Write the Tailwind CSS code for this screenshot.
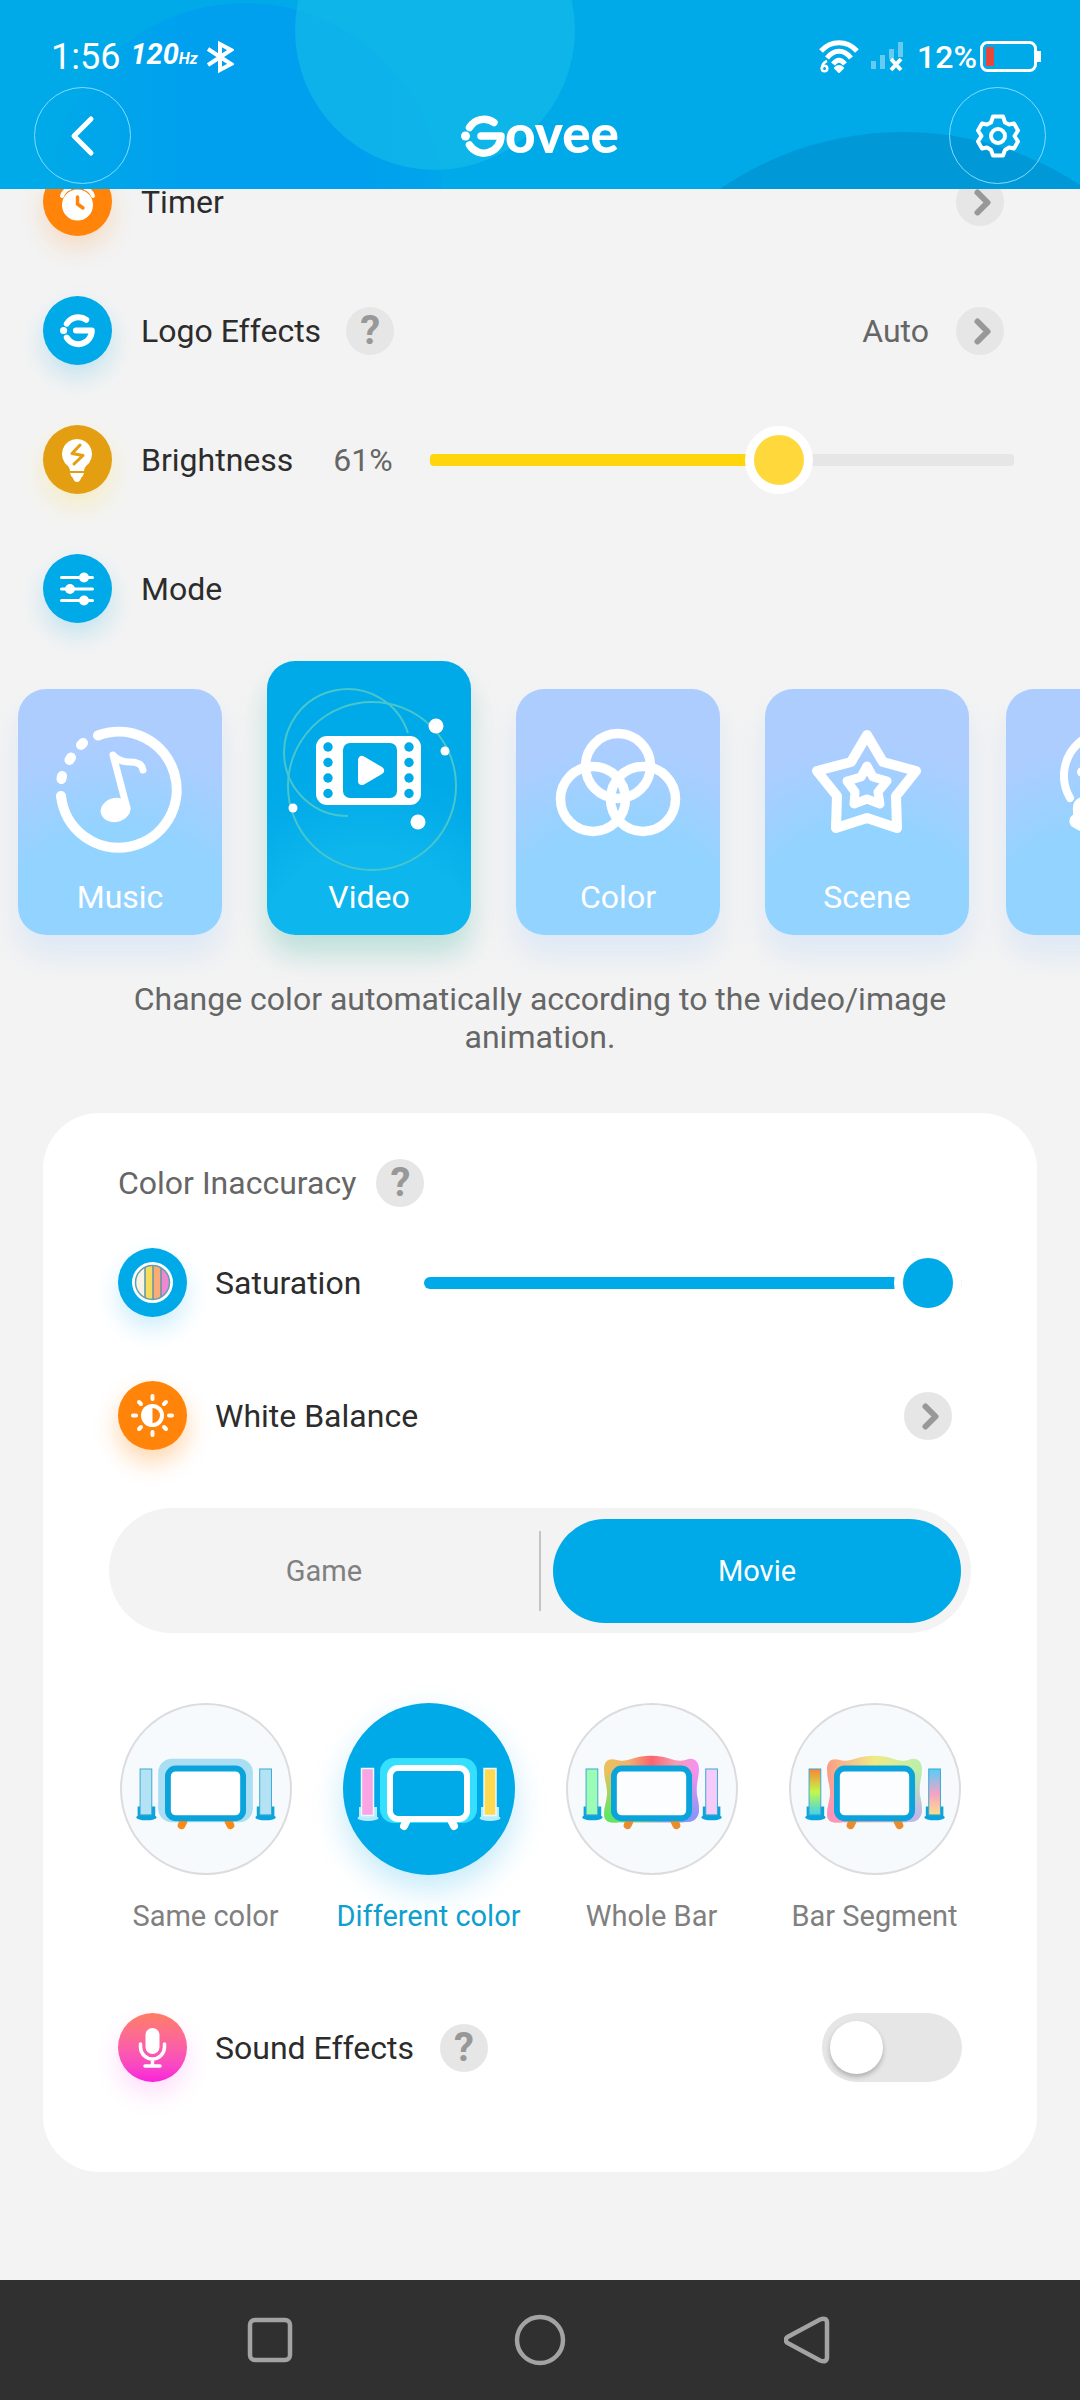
<!DOCTYPE html>
<html lang="en">

<head>
    <meta charset="UTF-8">
    <meta name="viewport" content="width=device-width, initial-scale=1.0">
    <title>Govee Home</title>
    <script src="https://cdn.jsdelivr.net/npm/@tailwindcss/browser@4"></script>
</head>

<body class="min-h-screen flex flex-col bg-[#f3f3f3] font-[Roboto,sans-serif] text-[32px] leading-[38px] text-[#2c2c2c]">

    <!-- Shared icons -->
    <svg class="absolute size-0" aria-hidden="true">
        <symbol id="govee-g" viewBox="0 0 44 44">
            <circle cx="4.5" cy="22" r="4.5" fill="#fff" />
            <path d="M8.500 13.500A17 17 0 0 1 33 8.500M20 22H40A17 17 0 0 1 8.500 31" fill="none" stroke="#fff" stroke-width="7.500" stroke-linecap="round" stroke-linejoin="round" />
        </symbol>
        <symbol id="chevron" viewBox="0 0 48 48">
            <path d="M21.500 14.500L31.500 24.500L21.500 34.500" fill="none" stroke="#989898" stroke-width="6" stroke-linecap="round" stroke-linejoin="round" />
        </symbol>
        <!-- Lamp stands: the tubes are filled by each use -->
        <symbol id="stand" viewBox="0 0 22 56">
            <path d="M2 41h18v10H2z" fill="currentColor" />
            <ellipse cx="11" cy="52" rx="10.500" ry="3" fill="currentColor" />
        </symbol>
        <defs>
            <path id="blob" d="M37 68C36 57 42 54 49 56C60 60 66 52 85 52C104 52 110 60 121 56C129 53 135 58 134 68C133 78 131 82 132 92C134 102 135 108 133 113C130 120 124 120 118 120H52C44 121 37 120 37 112C37 104 40 98 40 90C40 82 37 76 37 68Z" />
            <linearGradient id="fadeGrad" x1="0" y1="0" x2="0" y2="1">
                <stop offset=".25" stop-color="#000" />
                <stop offset=".85" stop-color="#fff" />
            </linearGradient>
            <mask id="fade" maskUnits="userSpaceOnUse" x="30" y="50" width="110" height="74">
                <rect x="30" y="50" width="110" height="74" fill="url(#fadeGrad)" />
            </mask>
        </defs>
    </svg>

    <header class="relative z-10 overflow-hidden bg-[#00a9e8] text-white">
        <svg class="absolute inset-0 size-full" preserveAspectRatio="xMidYMin slice" viewBox="0 0 1080 189" aria-hidden="true">
            <defs>
                <linearGradient id="deep" x1="0" x2="1" y1="0" y2="0">
                    <stop offset="0" stop-color="#00a0ee" stop-opacity="0" />
                    <stop offset=".35" stop-color="#00a0ee" />
                    <stop offset=".8" stop-color="#00a0ee" />
                    <stop offset="1" stop-color="#00a0ee" stop-opacity=".4" />
                </linearGradient>
            </defs>
            <circle cx="245" cy="200" r="197" fill="url(#deep)" />
            <circle cx="435" cy="30" r="140" fill="#14bbe8" fill-opacity=".65" />
            <circle cx="903" cy="454" r="322" fill="#0098d6" />
        </svg>

        <!-- Status bar -->
        <div class="relative flex h-[87px] items-center pt-[26px] pr-[39px] pl-[51px]">
            <span class="text-[36px]">1:56</span>
            <span class="ml-[10px] font-['Liberation_Sans_Narrow',Roboto,sans-serif] text-[29px] font-bold italic">120<span class="text-[16px]">Hz</span></span>
            <svg class="ml-[8px] h-[34px] w-[28px]" viewBox="0 0 28 34" fill="none" stroke="#fff" stroke-width="4" aria-hidden="true">
                <path d="M2 9L25 24L14 30V4L25 10L2 25" stroke-linejoin="miter" />
            </svg>
            <svg class="ml-auto h-[34px] w-[40px]" viewBox="0 0 40 34" fill="none" stroke="#fff" stroke-width="5" aria-hidden="true">
                <path d="M2 11C12 0 28 0 38 11M8 18C15 9 25 9 32 18M14 24C18 19 22 19 26 24" />
                <path d="M16 28Q20 24 24 28L20 32Z" fill="#fff" stroke-width="2" stroke-linejoin="round" />
                <path d="M8 21Q3 23 3 28.500" stroke-width="2.500" />
                <circle cx="5.500" cy="28.500" r="2.800" stroke-width="2.500" />
            </svg>
            <svg class="ml-[12px] h-[32px] w-[33px]" viewBox="0 0 33 32" aria-hidden="true">
                <path d="M0 20h5v8H0zM9 14h5v14H9zM18 8h5v10H18zM27 1h5v15H27z" fill="#fff" fill-opacity=".4" />
                <path d="M20 18L30 29M30 18L20 29" stroke="#fff" stroke-width="4" />
            </svg>
            <span class="ml-[13px] text-[32px] font-medium">12%</span>
            <svg class="ml-[3px] h-[31px] w-[61px]" viewBox="0 0 61 31" aria-hidden="true">
                <rect x="1.500" y="1.500" width="54" height="28" rx="6" fill="none" stroke="#fff" stroke-width="3" />
                <path d="M57 10h4v11h-4z" fill="#fff" />
                <rect x="6" y="6" width="8" height="19" fill="#e8473c" />
            </svg>
        </div>

        <div class="relative flex items-center justify-between px-[34px] pb-[5px]">
            <button aria-label="Back" class="flex size-[97px] items-center justify-center rounded-full border-[1px] border-[#7fdcff]">
                <svg class="size-[48px]" viewBox="0 0 48 48" fill="none" stroke="#fff" stroke-width="5" stroke-linecap="round" stroke-linejoin="round">
                    <path d="M32 7L15 24L32 41" />
                </svg>
            </button>
            <h1 aria-label="Govee" class="flex items-center font-[Lato,sans-serif] text-[53px] leading-[60px] font-black">
                <svg class="size-[44px]"><use href="#govee-g" /></svg><span class="pb-[6px]">ovee</span>
            </h1>
            <button aria-label="Settings" class="flex size-[97px] items-center justify-center rounded-full border-[1px] border-[#7fdcff]">
                <svg class="size-[48px]" viewBox="0 0 48 48" fill="none" stroke="#fff" stroke-width="4" stroke-linejoin="round">
                    <circle cx="24" cy="24" r="7" />
                    <path d="M19 4.500H29L31 10.500L35 12.500L40 11.500L44 18.500L40.500 24L44 29.500L40 36.500L35 35.500L31 38L29 43.500H19L17 38L13 35.500L8 36.500L4 29.500L7.500 24L4 18.500L8 11.500L13 12.500L17 10.500Z" />
                </svg>
            </button>
        </div>
    </header>

    <!-- The list is scrolled a little way under the header -->
    <main class="-mt-[52px] flex-1 pb-[107px]">
        <section class="pl-[43px]">
            <div class="flex h-[129px] items-center pr-[76px]">
                <svg class="size-[69px] rounded-full bg-[#ff8409] shadow-[0_12px_24px_#ff840933]" viewBox="0 0 69 69" aria-hidden="true">
                    <path d="M19 29Q21 23 27 21M50 29Q48 23 42 21" fill="none" stroke="#fff" stroke-width="4" stroke-linecap="round" />
                    <circle cx="34.500" cy="38" r="15.500" fill="#fff" />
                    <path d="M34.500 30V37L40 41" fill="none" stroke="#ff8409" stroke-width="3.500" stroke-linecap="round" />
                </svg>
                <span class="ml-[29px]">Timer</span>
                <button aria-label="Open timer" class="ml-auto size-[48px] rounded-full bg-[#e6e6e6]"><svg class="size-full"><use href="#chevron" /></svg></button>
            </div>

            <div class="flex h-[129px] items-center pr-[76px]">
                <span class="flex size-[69px] items-center justify-center rounded-full bg-[#00a9e8] shadow-[0_12px_24px_#00a9e833]">
                    <svg class="size-[35px]"><use href="#govee-g" /></svg>
                </span>
                <span class="ml-[29px]">Logo Effects</span>
                <button aria-label="About logo effects" class="ml-[25px] size-[48px] rounded-full bg-[#e6e6e6] text-[40px] leading-[48px] font-bold text-[#989898]">?</button>
                <span class="ml-auto text-[#666]">Auto</span>
                <button aria-label="Open logo effects" class="ml-[27px] size-[48px] rounded-full bg-[#e6e6e6]"><svg class="size-full"><use href="#chevron" /></svg></button>
            </div>

            <div class="flex h-[129px] items-center pr-[66px]">
                <svg class="size-[69px] rounded-full bg-[#e39e12] shadow-[0_12px_24px_#ffd50c33]" viewBox="0 0 69 69" aria-hidden="true">
                    <path d="M34 14a15 15 0 0 1 9 27Q41 43 41 46H27Q27 43 25 41A15 15 0 0 1 34 14ZM27 48H41Q40 52 38 53Q37 57 34 57Q31 57 30 53Q28 52 27 48Z" fill="#fff" />
                    <path d="M37 20L29 28.500L40 30.500L31 39" fill="none" stroke="#e39e12" stroke-width="3" stroke-linejoin="round" stroke-linecap="round" />
                </svg>
                <label for="brightness" class="ml-[29px]">Brightness</label>
                <output for="brightness" class="ml-[40px] text-[#666]">61%</output>
                <input type="range" id="brightness" min="0" max="100" value="61" style="background-size: 61% 100%"
                    class="ml-[37px] h-[12px] min-w-0 flex-1 appearance-none rounded-[4px] bg-[#e6e6e6] bg-[linear-gradient(#ffd50c,#ffd50c)] bg-no-repeat [&::-webkit-slider-thumb]:size-[68px] [&::-webkit-slider-thumb]:appearance-none [&::-webkit-slider-thumb]:rounded-full [&::-webkit-slider-thumb]:border-[9px] [&::-webkit-slider-thumb]:border-solid [&::-webkit-slider-thumb]:border-white [&::-webkit-slider-thumb]:bg-[#ffd93b]">
            </div>

            <div class="flex h-[129px] items-center">
                <svg class="size-[69px] rounded-full bg-[#00a9e8] shadow-[0_12px_24px_#00a9e833]" viewBox="0 0 69 69" aria-hidden="true">
                    <path d="M18.500 23.500h31M18.500 35h31M18.500 46.500h31" stroke="#fff" stroke-width="3" stroke-linecap="round" />
                    <g fill="#fff">
                        <circle cx="41" cy="23.500" r="5" />
                        <circle cx="27" cy="35" r="5" />
                        <circle cx="41" cy="46.500" r="5" />
                    </g>
                </svg>
                <h2 class="ml-[29px]">Mode</h2>
            </div>
        </section>

        <!-- Mode cards, the last one runs off the right edge -->
        <div class="mt-[8px] flex items-end gap-[45px] overflow-x-clip pl-[18px] text-white">
            <button class="w-[204px] shrink-0 rounded-[28px] bg-[radial-gradient(circle_at_50%_110%,#93d3ff_45%,#adcdff_75%)] pb-[10px] shadow-[0_20px_28px_#93c3ff38]">
                <svg class="block h-[180px] w-full" viewBox="0 0 204 180" fill="none" stroke="#fff" stroke-width="10" stroke-linecap="round">
                    <path d="M80 46.500A58 58 0 1 1 43 107M43.500 90l.5-3M51.500 71l1.500-2.500M63 56l2-2" />
                    <ellipse cx="97.500" cy="121" rx="15" ry="12" transform="rotate(-12 97.500 121)" fill="#fff" stroke="none" />
                    <path d="M109 119L95 66Q101 73 112 73Q124 73 125 81" stroke-width="7" stroke-linejoin="round" />
                </svg>
                <span class="block leading-[56px]">Music</span>
            </button>
            <button aria-pressed="true" class="w-[204px] shrink-0 rounded-[28px] bg-[radial-gradient(circle_at_50%_110%,#0db6ec_35%,#00a9e8_60%)] pb-[10px] shadow-[0_20px_28px_#00a08a38]">
                <svg class="block h-[208px] w-full overflow-visible" viewBox="0 0 204 208">
                    <g fill="none" stroke="#48c6cd" stroke-width="2">
                        <circle cx="105" cy="125" r="84" />
                        <path d="M141 72A63.500 63.500 0 1 0 81 155" />
                    </g>
                    <g fill="#fff">
                        <circle cx="169" cy="65" r="7.500" />
                        <circle cx="178" cy="90" r="4.500" />
                        <circle cx="26" cy="147" r="4.500" />
                        <circle cx="151" cy="161" r="7.500" />
                        <rect x="49" y="75" width="105" height="69" rx="11" />
                    </g>
                    <g fill="#00a9e8">
                        <rect x="76" y="82" width="54" height="55" rx="7" />
                        <circle cx="61" cy="86" r="4.700" />
                        <circle cx="61" cy="101.500" r="4.700" />
                        <circle cx="61" cy="117" r="4.700" />
                        <circle cx="61" cy="132.500" r="4.700" />
                        <circle cx="142" cy="86" r="4.700" />
                        <circle cx="142" cy="101.500" r="4.700" />
                        <circle cx="142" cy="117" r="4.700" />
                        <circle cx="142" cy="132.500" r="4.700" />
                    </g>
                    <path d="M95 99V120L113 109.500Z" fill="#fff" stroke="#fff" stroke-width="8" stroke-linejoin="round" />
                </svg>
                <span class="block leading-[56px]">Video</span>
            </button>
            <button class="w-[204px] shrink-0 rounded-[28px] bg-[radial-gradient(circle_at_50%_110%,#93d3ff_45%,#adcdff_75%)] pb-[10px] shadow-[0_20px_28px_#93c3ff38]">
                <svg class="block h-[180px] w-full" viewBox="0 0 204 180" fill="none" stroke="#fff" stroke-width="9.500">
                    <circle cx="102" cy="77" r="32.500" />
                    <circle cx="77" cy="110" r="32.500" />
                    <circle cx="127" cy="110" r="32.500" />
                </svg>
                <span class="block leading-[56px]">Color</span>
            </button>
            <button class="w-[204px] shrink-0 rounded-[28px] bg-[radial-gradient(circle_at_50%_110%,#93d3ff_45%,#adcdff_75%)] pb-[10px] shadow-[0_20px_28px_#93c3ff38]">
                <svg class="block h-[180px] w-full" viewBox="0 0 204 180" fill="none" stroke="#fff" stroke-linejoin="round">
                    <path d="M102 46L118 73L151 82L131 107L132 139L102 129L71 139L72 107L52 82L86 73Z" stroke-width="10" />
                    <path d="M102 77L108 88L122 92L113 103L115 115L102 110L89 115L90 103L82 92L96 88Z" stroke-width="9" />
                </svg>
                <span class="block leading-[56px]">Scene</span>
            </button>
            <button aria-label="More modes" class="-ml-[8px] h-[246px] w-[204px] shrink-0 rounded-[28px] bg-[radial-gradient(circle_at_50%_110%,#93d3ff_45%,#adcdff_75%)] pb-[66px] shadow-[0_20px_28px_#93c3ff38]">
                <svg class="block h-[180px] w-full" viewBox="0 0 204 180" fill="none" stroke="#fff" stroke-width="8" stroke-linecap="round">
                    <path d="M64 109A44 44 0 1 1 140 109" />
                    <circle cx="76" cy="83" r="5" fill="#fff" stroke="none" />
                    <path d="M76 112Q70 114 71 122V128Q66 130 68 134Q72 137 80 140H124Q137 137 134 132V122Q134 112 124 112Z" fill="#fff" />
                </svg>
            </button>
        </div>

        <p class="mt-[45px] px-[108px] text-center text-[#666]">Change color automatically according to the video/image animation.</p>

        <section class="mx-[43px] mt-[57px] rounded-[56px] bg-white px-[75px] pt-[46px] pb-[90px]">
            <div class="flex items-center">
                <h2 class="text-[#666]">Color Inaccuracy</h2>
                <button aria-label="About color inaccuracy" class="ml-[20px] size-[48px] rounded-full bg-[#e6e6e6] text-[40px] leading-[48px] font-bold text-[#989898]">?</button>
            </div>

            <div class="mt-[41px] flex items-center">
                <svg class="size-[69px] rounded-full bg-[#00a9e8] shadow-[0_12px_24px_#00a9e833]" viewBox="0 0 69 69" aria-hidden="true">
                    <defs>
                        <clipPath id="disc"><circle cx="34.500" cy="34.500" r="17" /></clipPath>
                    </defs>
                    <circle cx="34.500" cy="34.500" r="20.500" fill="#fff" />
                    <g clip-path="url(#disc)">
                        <path d="M17 17h10v36H17z" fill="#f7f4e4" />
                        <path d="M27 17h8v36h-8z" fill="#f5dc5c" />
                        <path d="M35 17h8v36h-8z" fill="#fbab76" />
                        <path d="M43 17h10v36H43z" fill="#ee88cf" />
                        <path d="M27 17v36M35 17v36M43 17v36" stroke="#5f93a8" stroke-width="1.500" />
                    </g>
                    <circle cx="34.500" cy="34.500" r="17" fill="none" stroke="#5fa0b8" stroke-width="1.500" />
                </svg>
                <label for="saturation" class="ml-[28px] w-[209px]">Saturation</label>
                <input type="range" id="saturation" min="0" max="100" value="100" style="background-size: 100% 100%"
                    class="h-[12px] min-w-0 flex-1 appearance-none rounded-full bg-[#e6e6e6] bg-[linear-gradient(#00a9e8,#00a9e8)] bg-no-repeat [&::-webkit-slider-thumb]:size-[68px] [&::-webkit-slider-thumb]:appearance-none [&::-webkit-slider-thumb]:rounded-full [&::-webkit-slider-thumb]:border-[9px] [&::-webkit-slider-thumb]:border-solid [&::-webkit-slider-thumb]:border-white [&::-webkit-slider-thumb]:bg-[#00a9e8]">
            </div>

            <div class="mt-[64px] flex items-center">
                <svg class="size-[69px] rounded-full bg-[#ff8409] shadow-[0_12px_24px_#ff840955]" viewBox="0 0 69 69" aria-hidden="true">
                    <circle cx="34.500" cy="34.500" r="11.500" fill="#fff" />
                    <path d="M34.500 27A7.500 7.500 0 0 1 34.500 42Z" fill="#ff8409" />
                    <path d="M34.500 15v3M34.500 51v3M15 34.500h3M51 34.500h3M21 21l2 2M46 46l2 2M21 48l2-2M46 23l2-2" stroke="#fff" stroke-width="4" stroke-linecap="round" />
                </svg>
                <span class="ml-[28px]">White Balance</span>
                <button aria-label="Open white balance" class="mr-[10px] ml-auto size-[48px] rounded-full bg-[#e6e6e6]"><svg class="size-full"><use href="#chevron" /></svg></button>
            </div>

            <div class="-mx-[9px] mt-[58px] grid h-[125px] grid-cols-[1fr_2px_1fr] items-center rounded-full bg-[#f3f3f3] text-[29px]">
                <button class="h-[104px] rounded-full text-[#808080]">Game</button>
                <span class="h-[80px] bg-[#c4c4c4]"></span>
                <button aria-pressed="true" class="mr-[10px] ml-[12px] h-[104px] rounded-full bg-[#00a9e8] text-white">Movie</button>
            </div>

            <!-- How the picture colors are spread over the lights -->
            <div class="-mx-[24px] mt-[70px] grid grid-cols-4 text-[29px] text-[#808080]">
                <button class="flex flex-col items-center">
                    <svg class="size-[172px] rounded-full border-[2px] border-[#dcdcde] bg-[#f6fafd]" viewBox="0 0 172 172">
                        <rect x="37" y="55" width="97" height="65" rx="14" fill="#aadff3" />
                        <path d="M63 119L61 123M109 119L111 123" stroke="#f98a18" stroke-width="8" stroke-linecap="round" />
                        <rect x="47" y="65" width="77" height="51" rx="8" fill="#fff" stroke="#0ba3dc" stroke-width="6" />
                        <g color="#0ba3dc" stroke="#3aa9d0">
                            <use href="#stand" x="14" y="63" width="22" height="56" stroke="none" />
                            <rect x="18.500" y="65.500" width="12" height="47" fill="#b4e2f5" />
                            <use href="#stand" x="136" y="63" width="22" height="56" stroke="none" />
                            <rect x="141" y="65.500" width="12" height="47" fill="#b4e2f5" />
                        </g>
                    </svg>
                    <span class="mt-[22px]">Same color</span>
                </button>
                <button aria-pressed="true" class="flex flex-col items-center text-[#0d9fd0]">
                    <svg class="size-[172px] rounded-full bg-[#00a9e8] shadow-[0_14px_32px_#00a9e83d]" viewBox="0 0 172 172">
                        <rect x="37" y="55" width="97" height="65" rx="14" fill="#35e0ff" />
                        <path d="M63 119L61 123M109 119L111 123" stroke="#fff" stroke-width="8" stroke-linecap="round" />
                        <rect x="47" y="65" width="77" height="51" rx="8" fill="#00a9e8" stroke="#fff" stroke-width="6" />
                        <g color="#b5ecff" stroke="#e8f9ff" stroke-width="1.500">
                            <use href="#stand" x="14" y="63" width="22" height="56" stroke="none" />
                            <rect x="18.500" y="65.500" width="12" height="47" fill="#fba4e3" />
                            <use href="#stand" x="136" y="63" width="22" height="56" stroke="none" />
                            <rect x="141" y="65.500" width="12" height="47" fill="#ffd94f" />
                        </g>
                    </svg>
                    <span class="mt-[22px]">Different color</span>
                </button>
                <button class="flex flex-col items-center">
                    <svg class="size-[172px] rounded-full border-[2px] border-[#dcdcde] bg-[#f6fafd]" viewBox="0 0 172 172">
                        <defs>
                            <linearGradient id="wholeTop">
                                <stop offset="0" stop-color="#e8c35a" />
                                <stop offset=".25" stop-color="#f2b36c" />
                                <stop offset=".5" stop-color="#fb6470" />
                                <stop offset=".75" stop-color="#f49db0" />
                                <stop offset="1" stop-color="#f590f5" />
                            </linearGradient>
                            <linearGradient id="wholeBottom">
                                <stop offset=".3" stop-color="#5fe667" />
                                <stop offset=".7" stop-color="#8a97f7" />
                            </linearGradient>
                        </defs>
                        <use href="#blob" fill="url(#wholeTop)" />
                        <g mask="url(#fade)"><use href="#blob" fill="url(#wholeBottom)" /></g>
                        <path d="M63 119L61 123M109 119L111 123" stroke="#e98c2d" stroke-width="8" stroke-linecap="round" />
                        <rect x="47" y="65" width="77" height="51" rx="8" fill="#fbfdfe" stroke="#0ba3dc" stroke-width="6" />
                        <g color="#0ba3dc" stroke="#3aa9d0">
                            <use href="#stand" x="14" y="63" width="22" height="56" stroke="none" />
                            <rect x="18.500" y="65.500" width="12" height="47" fill="#9bfcb6" />
                            <use href="#stand" x="136" y="63" width="22" height="56" stroke="none" />
                            <rect x="141" y="65.500" width="12" height="47" fill="#f4cbfb" />
                        </g>
                    </svg>
                    <span class="mt-[22px]">Whole Bar</span>
                </button>
                <button class="flex flex-col items-center">
                    <svg class="size-[172px] rounded-full border-[2px] border-[#dcdcde] bg-[#f6fafd]" viewBox="0 0 172 172">
                        <defs>
                            <linearGradient id="segTop">
                                <stop offset="0" stop-color="#f99d84" />
                                <stop offset=".25" stop-color="#f7c48a" />
                                <stop offset=".5" stop-color="#f0ea86" />
                                <stop offset="1" stop-color="#b9efac" />
                            </linearGradient>
                            <linearGradient id="segBottom">
                                <stop offset=".3" stop-color="#fd94bb" />
                                <stop offset=".7" stop-color="#c3b5ea" />
                            </linearGradient>
                            <linearGradient id="tubeLeft" x1="0" x2="0" y1="0" y2="1">
                                <stop offset="0" stop-color="#f98437" />
                                <stop offset=".5" stop-color="#c2f84a" />
                                <stop offset="1" stop-color="#3fd0f0" />
                            </linearGradient>
                            <linearGradient id="tubeRight" x1="0" x2="0" y1="0" y2="1">
                                <stop offset="0" stop-color="#56cdf9" />
                                <stop offset=".55" stop-color="#f6a3c4" />
                                <stop offset="1" stop-color="#fbe08a" />
                            </linearGradient>
                        </defs>
                        <use href="#blob" fill="url(#segTop)" />
                        <g mask="url(#fade)"><use href="#blob" fill="url(#segBottom)" /></g>
                        <path d="M63 119L61 123M109 119L111 123" stroke="#e98c2d" stroke-width="8" stroke-linecap="round" />
                        <rect x="47" y="65" width="77" height="51" rx="8" fill="#fbfdfe" stroke="#0ba3dc" stroke-width="6" />
                        <g color="#0ba3dc" stroke="#3aa9d0">
                            <use href="#stand" x="14" y="63" width="22" height="56" stroke="none" />
                            <rect x="18.500" y="65.500" width="12" height="47" fill="url(#tubeLeft)" />
                            <use href="#stand" x="136" y="63" width="22" height="56" stroke="none" />
                            <rect x="141" y="65.500" width="12" height="47" fill="url(#tubeRight)" />
                        </g>
                    </svg>
                    <span class="mt-[22px]">Bar Segment</span>
                </button>
            </div>

            <div class="mt-[78px] flex items-center">
                <svg class="size-[69px] rounded-full bg-linear-to-b from-[#ff7d62] to-[#f91ddc] shadow-[0_12px_24px_#f91ddc26]" viewBox="0 0 69 69" fill="none" stroke="#fff" aria-hidden="true">
                    <rect x="27.500" y="15" width="14" height="26" rx="7" fill="#fff" stroke="none" />
                    <path d="M22.500 31V34A12 12 0 0 0 46.500 34V31M34.500 46V51M27 53H42" stroke-width="3.500" stroke-linecap="round" />
                </svg>
                <label for="sound" class="ml-[28px]">Sound Effects</label>
                <button aria-label="About sound effects" class="ml-[26px] size-[48px] rounded-full bg-[#e6e6e6] text-[40px] leading-[48px] font-bold text-[#989898]">?</button>
                <input type="checkbox" role="switch" id="sound"
                    class="ml-auto flex h-[69px] w-[140px] appearance-none items-center rounded-full bg-[#e6e6e6] px-[8px] before:size-[53px] before:rounded-full before:bg-white before:shadow-[0_3px_5px_#0000003d] checked:justify-end checked:bg-[#00a9e8]">
            </div>
        </section>
    </main>

    <!-- System navigation -->
    <nav class="grid h-[120px] grid-cols-3 place-items-center bg-[#303030] px-[12.5%]">
        <button aria-label="Recent apps" class="size-[52px]">
            <svg viewBox="0 0 52 52" fill="none" stroke="#a3a3a3" stroke-width="4.500"><rect x="6" y="6" width="40" height="40" rx="5" /></svg>
        </button>
        <button aria-label="Home" class="size-[52px]">
            <svg viewBox="0 0 52 52" fill="none" stroke="#a3a3a3" stroke-width="4.500"><circle cx="26" cy="26" r="23" /></svg>
        </button>
        <button aria-label="Back" class="size-[52px]">
            <svg viewBox="0 0 52 52" fill="none" stroke="#a3a3a3" stroke-width="4.500"><path d="M3.500 23L36 5.500Q43 3 43 9V43Q43 49 36 46.500L3.500 29Q0 26 3.500 23Z" /></svg>
        </button>
    </nav>

    <script>
        const brightnessInput = document.getElementById('brightness');
        const brightnessOutput = document.querySelector('output[for="brightness"]');

        // Keep the colored part of each track in step with its thumb
        document.querySelectorAll('input[type="range"]').forEach((slider) => {
            slider.addEventListener('input', () => {
                slider.style.backgroundSize = `${slider.value}% 100%`;
            });
        });

        brightnessInput.addEventListener('input', () => {
            brightnessOutput.textContent = `${brightnessInput.value}%`;
        });
    </script>
</body>

</html>
